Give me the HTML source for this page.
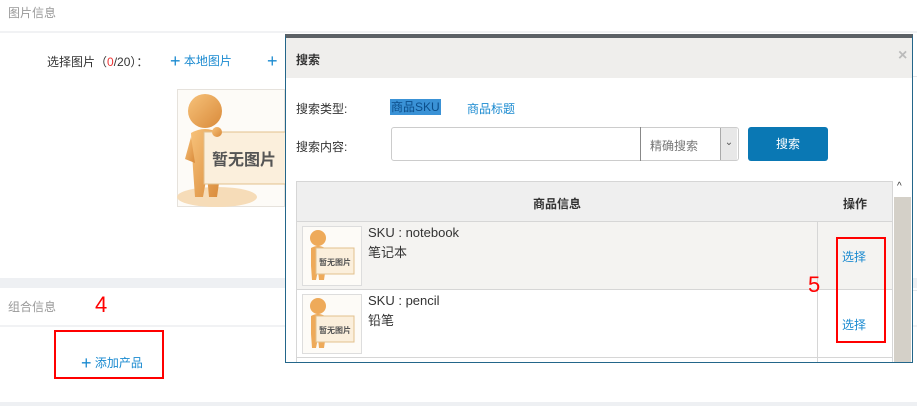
<!DOCTYPE html>
<html><head><meta charset="utf-8"><style>
*{margin:0;padding:0;box-sizing:border-box}
body{width:917px;height:406px;overflow:hidden;background:#fff;font-family:"Liberation Sans","Noto Sans CJK SC",sans-serif;font-size:12px;color:#333;position:relative}
.a{position:absolute;white-space:nowrap}
.blue{color:#1a8ad0}
</style></head><body>
<div class="a" style="left:8px;top:4px;color:#999;font-size:12px">图片信息</div>
<div class="a" style="left:0;top:31px;width:917px;height:2px;background:#f1f2f4"></div>
<div class="a" style="left:47px;top:53px;font-size:12px">选择图片（<span style="color:#e33">0</span>/20）：</div>
<div class="a blue" style="left:170px;top:51px;font-size:12px"><span style="font-size:18px;vertical-align:-2px">+</span> 本地图片</div>
<div class="a blue" style="left:267px;top:51px;font-size:18px">+</div>
<svg class="a" style="left:177px;top:89px" width="108" height="118" viewBox="0 0 108 118">
<defs><linearGradient id="g1" x1="0" y1="0" x2="1" y2="1"><stop offset="0" stop-color="#f7c27a"/><stop offset="1" stop-color="#d98a3a"/></linearGradient></defs>
<rect x="0.5" y="0.5" width="107" height="117" fill="#fdfbf7" stroke="#e6e2dc"/>
<ellipse cx="40" cy="108" rx="40" ry="10" fill="#f6dcb8"/>
<circle cx="28" cy="22" r="17" fill="url(#g1)"/>
<path d="M14 44 Q28 36 42 44 L44 80 L40 108 L32 108 L30 86 L26 108 L18 108 L16 80 Z" fill="url(#g1)"/>
<path d="M14 48 L8 70 L18 74 Z" fill="url(#g1)"/>
<rect x="27" y="43" width="84" height="52" fill="#fbefdc" stroke="#e2c08e"/>
<circle cx="40" cy="43" r="5" fill="url(#g1)"/>
<text x="35" y="76" font-size="16" font-weight="bold" fill="#555" font-family="Noto Sans CJK SC,sans-serif">暂无图片</text>
</svg>
<div class="a" style="left:0;top:278px;width:917px;height:10px;background:#eef0f3"></div>
<div class="a" style="left:8px;top:298px;color:#999">组合信息</div>
<div class="a" style="left:0;top:325px;width:917px;height:2px;background:#f1f2f4"></div>
<div class="a" style="left:95px;top:292px;color:#f00;font-size:22px">4</div>
<div class="a" style="left:54px;top:330px;width:110px;height:49px;border:2px solid #f00"></div>
<div class="a blue" style="left:81px;top:353px;font-size:12px"><span style="font-size:18px;vertical-align:-2px">+</span> 添加产品</div>
<div class="a" style="left:0;top:402px;width:917px;height:4px;background:#eef0f3"></div>

<div class="a" style="left:912px;top:76px;width:5px;height:1px;background:#e5e7ea"></div>
<div class="a" style="left:912px;top:290px;width:5px;height:1px;background:#e5e7ea"></div>

<!-- modal -->
<div class="a" style="left:285px;top:34px;width:628px;height:329px;border:1px solid #23668a;border-top:4px solid #5c6166;background:#fff;overflow:hidden">
 <div class="a" style="left:0;top:0;width:626px;height:40px;background:#efeeec"></div>
 <div class="a" style="left:10px;top:13px;font-weight:bold;color:#333">搜索</div>
 <div class="a" style="left:612px;top:9px;color:#bbb;font-size:16px;font-weight:bold">×</div>
 <div class="a" style="left:10px;top:62px">搜索类型:</div>
 <div class="a" style="left:104px;top:61px;background:#3a92d6;padding:0 1px;line-height:16px;color:#0c4e8a">商品SKU</div>
 <div class="a blue" style="left:181px;top:62px">商品标题</div>
 <div class="a" style="left:10px;top:100px">搜索内容:</div>
 <div class="a" style="left:105px;top:89px;width:348px;height:34px;border:1px solid #ccc;border-radius:3px;background:#fff"></div>
 <div class="a" style="left:354px;top:89px;width:1px;height:34px;background:#888"></div>
 <div class="a" style="left:364px;top:99px;color:#777">精确搜索</div>
 <div class="a" style="left:434px;top:90px;width:17px;height:32px;background:#e8e8e8;border-left:1px solid #aaa;color:#555;font-size:10px;text-align:center;line-height:30px">⌄</div>
 <div class="a" style="left:462px;top:89px;width:80px;height:34px;background:#0a78b4;border-radius:3px;color:#fff;text-align:center;line-height:34px">搜索</div>
 <!-- table -->
 <div class="a" style="left:10px;top:143px;width:597px;height:200px;border:1px solid #d6d6d6;background:#fff">
  <div class="a" style="left:0;top:0;width:595px;height:40px;background:#efefef;border-bottom:1px solid #d6d6d6"></div>
  <div class="a" style="left:236px;top:13px;font-weight:bold">商品信息</div>
  <div class="a" style="left:546px;top:13px;font-weight:bold">操作</div>
  <div class="a" style="left:0;top:40px;width:595px;height:68px;background:#f4f3f1;border-bottom:1px solid #d6d6d6"></div>
  <div class="a" style="left:0;top:108px;width:595px;height:68px;background:#fff;border-bottom:1px solid #d6d6d6"></div>
  <div class="a" style="left:520px;top:40px;width:1px;height:160px;background:#d6d6d6"></div>
  <div class="a" style="left:71px;top:43px;font-size:13px">SKU : notebook</div>
  <div class="a" style="left:71px;top:60px;font-size:13px">笔记本</div>
  <div class="a blue" style="left:545px;top:66px">选择</div>
  <div class="a" style="left:71px;top:111px;font-size:13px">SKU : pencil</div>
  <div class="a" style="left:71px;top:128px;font-size:13px">铅笔</div>
  <div class="a blue" style="left:545px;top:134px">选择</div>
  <svg class="a" style="left:5px;top:44px" width="60" height="60" viewBox="0 0 60 60"><rect x="0.5" y="0.5" width="59" height="59" fill="#fdfbf7" stroke="#ddd"/><circle cx="16" cy="12" r="8" fill="#eeaa5a"/><path d="M9 22 Q16 18 23 22 L24 40 L22 54 L17 54 L16 44 L14 54 L10 54 L9 40Z" fill="#eeaa5a"/><rect x="14" y="22" width="38" height="26" fill="#fbefdc" stroke="#e2c08e"/><text x="17" y="39" font-size="8" font-weight="bold" fill="#555" font-family="Noto Sans CJK SC,sans-serif">暂无图片</text></svg>
  <svg class="a" style="left:5px;top:112px" width="60" height="60" viewBox="0 0 60 60"><rect x="0.5" y="0.5" width="59" height="59" fill="#fdfbf7" stroke="#ddd"/><circle cx="16" cy="12" r="8" fill="#eeaa5a"/><path d="M9 22 Q16 18 23 22 L24 40 L22 54 L17 54 L16 44 L14 54 L10 54 L9 40Z" fill="#eeaa5a"/><rect x="14" y="22" width="38" height="26" fill="#fbefdc" stroke="#e2c08e"/><text x="17" y="39" font-size="8" font-weight="bold" fill="#555" font-family="Noto Sans CJK SC,sans-serif">暂无图片</text></svg>
  <div class="a" style="left:5px;top:180px;width:60px;height:20px;border:1px solid #ddd"></div>
 </div>
 <div class="a" style="left:607px;top:143px;width:19px;height:185px;background:#fff"></div>
 <div class="a" style="left:608px;top:159px;width:17px;height:170px;background:#d4d0c8"></div>
 <div class="a" style="left:611px;top:143px;font-size:10px;color:#333">^</div>
</div>
<div class="a" style="left:808px;top:272px;color:#f00;font-size:22px">5</div>
<div class="a" style="left:836px;top:237px;width:50px;height:106px;border:2px solid #f00"></div>
</body></html>
